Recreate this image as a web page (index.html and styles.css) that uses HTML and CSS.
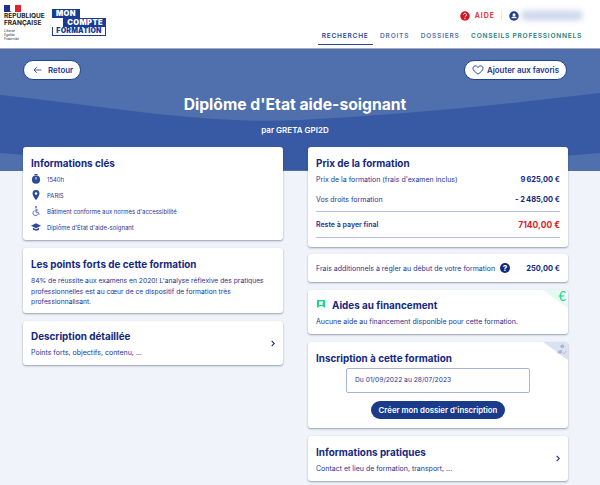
FILE: index.html
```html
<!DOCTYPE html>
<html lang="fr">
<head>
    <meta charset="UTF-8">
    <title>Diplôme d'Etat aide-soignant</title>
    <link rel="stylesheet" href="styles.css">
</head>
<body>

<header class="header">
    <div class="logos">
        <div class="marianne">
            <div class="flag"><span class="flag-blue"></span><span class="flag-white"></span><span class="flag-red"></span></div>
            <div class="rf">RÉPUBLIQUE<br>FRANÇAISE</div>
            <div class="devise">Liberté<br>Égalité<br>Fraternité</div>
        </div>
        <div class="mcf">
            <span class="mcf-mon">MON</span>
            <span class="mcf-compte">COMPTE</span>
            <span class="mcf-formation">FORMATION</span>
        </div>
    </div>
    <div class="header-right">
        <div class="user-row">
            <svg class="ico-help" viewBox="0 0 20 20"><circle cx="10" cy="10" r="9.5" fill="#d8131e"/><path d="M7 7.6a3 3 0 1 1 4.6 2.5c-1 .7-1.6 1.2-1.6 2.4" fill="none" stroke="#fff" stroke-width="2"/><circle cx="10" cy="15.3" r="1.3" fill="#fff"/></svg>
            <span class="aide">AIDE</span>
            <span class="sep"></span>
            <svg class="ico-user" viewBox="0 0 20 20"><circle cx="10" cy="10" r="9.5" fill="#1a3a94"/><circle cx="10" cy="7.5" r="3" fill="#fff"/><path d="M4.5 14.5c1-2.6 3-3.3 5.5-3.3s4.5.7 5.5 3.300z" fill="#fff"/></svg>
            <span class="user-blur"></span>
        </div>
        <nav class="nav">
            <a class="nav-item active">RECHERCHE</a>
            <a class="nav-item">DROITS</a>
            <a class="nav-item">DOSSIERS</a>
            <a class="nav-item green">CONSEILS PROFESSIONNELS</a>
        </nav>
    </div>
</header>

<section class="hero">
    <svg class="hero-bg" viewBox="0 0 600 122" preserveAspectRatio="none">
        <path d="M0 46C100 56 200 76 300 71C400 66 500 56 600 44V104C500 112 400 121 300 121C200 121 100 112 0 104Z" fill="#3859a3"/>
    </svg>
    <div class="hero-btns">
        <button class="pill">
            <svg class="ico-back" viewBox="0 0 14 12"><path d="M13 6H1.500M6 1.500 1.500 6 6 10.500" fill="none" stroke="#1a3a94" stroke-width="1.300"/></svg>
            Retour
        </button>
        <button class="pill">
            <svg class="ico-heart" viewBox="0 0 16 14"><path d="M8 12.800C3.500 9.500 1 7.300 1 4.600 1 2.600 2.500 1.200 4.300 1.200 5.700 1.200 7.200 2 8 3.500 8.800 2 10.300 1.200 11.700 1.200 13.500 1.200 15 2.600 15 4.600 15 7.300 12.500 9.500 8 12.800Z" fill="none" stroke="#1a3a94" stroke-width="1.300"/></svg>
            Ajouter aux favoris
        </button>
    </div>
    <h1>Diplôme d'Etat aide-soignant</h1>
    <p class="par">par GRETA GPI2D</p>
</section>

<main class="columns">
    <div class="col">
        <div class="card key-card">
            <h2>Informations clés</h2>
            <ul class="key-list">
                <li>
                    <svg viewBox="0 0 16 16"><rect x="5.500" y="0" width="5" height="2" fill="#2d4a9a"/><circle cx="8" cy="9" r="6.500" fill="#2d4a9a"/><path d="M8 5v4" stroke="#fff" stroke-width="1.500"/></svg>
                    1540h
                </li>
                <li>
                    <svg viewBox="0 0 16 16"><path d="M8 0a5.500 5.500 0 0 0-5.500 5.500C2.500 9.500 8 16 8 16s5.500-6.500 5.500-10.500A5.500 5.500 0 0 0 8 0Z" fill="#2d4a9a"/><circle cx="8" cy="5.500" r="2" fill="#fff"/></svg>
                    PARIS
                </li>
                <li>
                    <svg viewBox="0 0 16 16"><circle cx="8" cy="1.500" r="1.400" fill="#2d4a9a"/><path d="M8 4v6h3.500l1.500 4M8 6.500h3.500M5.800 7.500a4 4 0 1 0 5 5.500" fill="none" stroke="#2d4a9a" stroke-width="1.300"/></svg>
                    Bâtiment conforme aux normes d'accessibilité
                </li>
                <li>
                    <svg viewBox="0 0 16 16"><path d="M8 2 0 6l8 4 8-4Z" fill="#2d4a9a"/><path d="M3 9v3c2 2.500 8 2.500 10 0V9l-5 2.500Z" fill="#2d4a9a"/></svg>
                    Diplôme d'État d'aide-soignant
                </li>
            </ul>
        </div>
        <div class="card points-card">
            <h2>Les points forts de cette formation</h2>
            <p class="txt">84% de réussite aux examens en 2020! L'analyse réflexive des pratiques professionnelles est au cœur de ce dispositif de formation très professionnalisant.</p>
        </div>
        <div class="card card-link link-short">
            <div>
                <h2>Description détaillée</h2>
                <p class="txt">Points forts, objectifs, contenu, ...</p>
            </div>
            <svg class="chev" viewBox="0 0 6 10"><path d="M1 1l4 4-4 4" fill="none" stroke="#14287f" stroke-width="1.600"/></svg>
        </div>
    </div>

    <div class="col">
        <div class="card price-card">
            <h2>Prix de la formation</h2>
            <div class="price-row"><span>Prix de la formation (frais d'examen inclus)</span><b>9&#8201;625,00 €</b></div>
            <div class="price-row droits"><span>Vos droits formation</span><b>- 2&#8201;485,00 €</b></div>
            <div class="price-row total"><strong>Reste à payer final</strong><b>7140,00 €</b></div>
        </div>
        <div class="card frais-card">
            <span>Frais additionnels à régler au début de votre formation</span>
            <span class="qmark">?</span>
            <b>250,00 €</b>
        </div>
        <div class="card aides-card">
            <span class="corner corner-green"></span>
            <span class="corner-euro">€</span>
            <h2 class="aides-title">
                <svg viewBox="0 0 8 8"><path d="M0 0h8v8L5 6H3L0 8Z" fill="#19d88a"/><path d="M2 1.500h4v1.500L5 4l1 1H2Z" fill="#fff"/></svg>
                Aides au financement
            </h2>
            <p class="txt">Aucune aide au financement disponible pour cette formation.</p>
        </div>
        <div class="card inscr-card">
            <span class="corner corner-grey"></span>
            <svg class="corner-ico" viewBox="0 0 14 14"><circle cx="8" cy="3" r="2.500" fill="#a9b5d6"/><path d="M2 12c0-3 2-4.500 5-4.500 1 0 1 2 0 4.500Z" fill="#a9b5d6"/><path d="M8.500 11l1.500 1.500 3-3.500" fill="none" stroke="#a9b5d6" stroke-width="1.200"/></svg>
            <h2>Inscription à cette formation</h2>
            <div class="dates">Du 01/09/2022 au 28/07/2023</div>
            <button class="cta">Créer mon dossier d'inscription</button>
        </div>
        <div class="card card-link link-tall">
            <div>
                <h2>Informations pratiques</h2>
                <p class="txt">Contact et lieu de formation, transport, ...</p>
            </div>
            <svg class="chev" viewBox="0 0 6 10"><path d="M1 1l4 4-4 4" fill="none" stroke="#14287f" stroke-width="1.600"/></svg>
        </div>
    </div>
</main>

</body>
</html>
```
FILE: styles.css
```css
* {
    box-sizing: border-box;
}
html, body {
    height: 485px;
    overflow: hidden;
}
body {
    margin: 0;
    font-family: Inter, "Noto Sans", sans-serif;
    color: #1c3591;
    background: #f0f3f9;
}
h1, h2, p, ul {
    margin: 0;
    padding: 0;
}

.header {
    height: 49px;
    background: #fff;
    border-bottom: 1px solid #a9acb6;
    display: flex;
    justify-content: space-between;
    padding: 0 18px 0 4px;
}
.logos {
    display: flex;
    gap: 9px;
    padding-top: 5px;
}
.flag {
    display: flex;
    width: 17px;
    height: 7px;
}
.flag span {
    flex: 1;
}
.flag-blue { background: #1f2f8f; }
.flag-white { background: #fff; }
.flag-red { background: #e1232c; }
.marianne {
    width: 39px;
}
.rf {
    margin-top: 1px;
    font-size: 6.500px;
    line-height: 7px;
    font-weight: 700;
    color: #222;
    white-space: nowrap;
}
.devise {
    margin-top: 2px;
    font-size: 3.300px;
    line-height: 4px;
    font-style: italic;
    color: #333;
}
.mcf {
    display: flex;
    flex-direction: column;
    align-items: flex-start;
    margin-top: 4px;
    width: 54px;
    font-size: 7.500px;
    line-height: 9px;
    font-weight: 900;
    letter-spacing: 0.4px;
}
.mcf span {
    display: block;
}
.mcf-mon {
    background: #1a3a94;
    color: #fff;
    padding: 0 4px;
}
.mcf-compte {
    background: #1a3a94;
    color: #fff;
    align-self: stretch;
    text-align: right;
    padding-right: 3px;
    margin-left: 11px;
}
.mcf-formation {
    align-self: stretch;
    border: 1px solid #1a3a94;
    border-top: 0;
    color: #1a3a94;
    text-align: center;
    line-height: 8px;
    height: 9px;
    font-size: 7px;
    letter-spacing: 0.2px;
}

.header-right {
    display: flex;
    flex-direction: column;
    align-items: flex-end;
}
.user-row {
    display: flex;
    align-items: center;
    height: 30px;
    padding-top: 1px;
}
.ico-help, .ico-user {
    width: 10px;
    height: 10px;
}
.aide {
    margin-left: 5px;
    font-size: 7px;
    font-weight: 600;
    letter-spacing: 1px;
    color: #e1232c;
}
.sep {
    width: 1px;
    height: 11px;
    margin: 0 7px 0 6px;
    background: #e6e8ee;
}
.user-blur {
    width: 60px;
    height: 9px;
    margin-left: 3px;
    background: #c9d2ea;
    filter: blur(3px);
}
.nav {
    display: flex;
    gap: 3.500px;
}
.nav-item {
    font-size: 6.600px;
    line-height: 13px;
    font-weight: 600;
    letter-spacing: 0.75px;
    color: #5670ac;
    height: 15px;
    padding: 0 4px;
}
.nav-item.active {
    color: #274a9a;
    border-bottom: 1px solid #274a9a;
}
.nav-item.green {
    color: #22807f;
    padding-right: 0;
}

.hero {
    position: relative;
    height: 122px;
    background: #4f6fad;
    padding: 11px 33px 0 23px;
    text-align: center;
    color: #fff;
}
.hero-bg {
    position: absolute;
    left: 0;
    top: 0;
    width: 100%;
    height: 100%;
    display: block;
}
.hero-btns {
    position: relative;
    display: flex;
    justify-content: space-between;
}
.pill {
    display: flex;
    align-items: center;
    gap: 6px;
    height: 20px;
    padding: 0 7px;
    border: 1px solid #24418f;
    border-radius: 10px;
    background: #fff;
    font-family: inherit;
    font-size: 7.900px;
    font-weight: 600;
    color: #1c3591;
}
.ico-back {
    width: 9px;
    height: 8px;
    margin-left: 2px;
}
.ico-heart {
    width: 12px;
    height: 10px;
    margin-right: -3px;
}
.hero h1 {
    position: relative;
    margin: 15px 0 0;
    font-size: 15.700px;
    line-height: 20px;
    font-weight: 700;
}
.par {
    position: relative;
    margin: 10px 0 0;
    font-size: 8px;
    line-height: 10px;
    font-weight: 600;
}

.columns {
    position: relative;
    display: flex;
    gap: 25px;
    margin-top: -24px;
    padding: 0 32px 0 23px;
}
.col {
    flex: 1;
    display: flex;
    flex-direction: column;
    gap: 8px;
    min-width: 0;
}
.card {
    position: relative;
    background: #fff;
    border-radius: 3px;
    box-shadow: 0 1px 2px rgba(40, 50, 90, 0.45);
    padding: 9px 8px;
}
.card h2 {
    font-size: 9.900px;
    line-height: 14px;
    font-weight: 700;
    color: #14287f;
}
.txt {
    font-size: 7px;
    line-height: 10.500px;
    margin-top: 5px;
}

.key-card {
    height: 93px;
}
.key-list {
    list-style: none;
    margin-top: 1px;
}
.key-list li {
    display: flex;
    align-items: center;
    gap: 6px;
    height: 16px;
    font-size: 5.950px;
}
.key-list svg {
    width: 10px;
    height: 10px;
}
.points-card {
    height: 65px;
}
.points-card .txt {
    font-size: 6.750px;
}

.card-link {
    display: flex;
    align-items: center;
    justify-content: space-between;
    padding-top: 11px;
}
.link-short {
    height: 44px;
}
.link-tall {
    height: 45px;
}
.chev {
    width: 4px;
    height: 7px;
    margin-top: -2px;
}

.price-card {
    height: 100px;
}
.price-row {
    display: flex;
    justify-content: space-between;
    align-items: center;
    height: 18px;
    font-size: 7px;
}
.price-row b {
    font-size: 7.500px;
    font-weight: 700;
    color: #14287f;
}
.droits {
    border-bottom: 1px solid #b3c1e4;
    height: 24px;
}
.total {
    height: 26px;
    border-bottom: 1px solid #b3c1e4;
}
.total strong {
    font-weight: 600;
}
.price-row.total b {
    font-size: 8.500px;
    color: #dd1c1c;
}

.frais-card {
    display: flex;
    align-items: center;
    height: 28px;
    margin-top: -1px;
    padding: 0 8px;
    font-size: 7px;
}
.frais-card b {
    margin-left: auto;
    font-size: 7.500px;
    color: #14287f;
}
.qmark {
    display: inline-block;
    width: 10px;
    height: 10px;
    margin-left: 5px;
    border-radius: 50%;
    background: #14287f;
    color: #fff;
    font-size: 8px;
    line-height: 10px;
    font-weight: 800;
    text-align: center;
}

.corner {
    position: absolute;
    right: 0;
    top: 0;
    width: 25px;
    height: 18px;
    border-top-right-radius: 3px;
    clip-path: polygon(0 0, 100% 0, 100% 100%);
}
.corner-green {
    background: linear-gradient(45deg, #cdf8e4, #f2fef9);
}
.corner-grey { background: #dce1ef; }
.corner-euro {
    position: absolute;
    right: 2px;
    top: 0;
    font-family: Lato, sans-serif;
    font-size: 13px;
    line-height: 12px;
    color: #19d88a;
}
.corner-ico {
    position: absolute;
    right: 1px;
    top: 2px;
    width: 11px;
    height: 11px;
}

.aides-card {
    height: 44px;
    padding-top: 8px;
}
.aides-title {
    display: flex;
    align-items: center;
    gap: 6px;
}
.aides-title svg {
    width: 8px;
    height: 8px;
    margin: -2px 1px 0 1px;
}

.inscr-card {
    height: 86px;
    display: flex;
    flex-direction: column;
    align-items: center;
}
.inscr-card h2 {
    align-self: flex-start;
}
.dates {
    width: 184px;
    height: 25px;
    margin-top: 3px;
    padding-left: 8px;
    border: 1px solid #a7b5dc;
    border-radius: 2px;
    font-size: 6.700px;
    line-height: 23px;
}
.cta {
    height: 20px;
    margin-top: 8px;
    padding: 0 8px;
    border: 0;
    border-radius: 10px;
    background: #1a3a8c;
    color: #fff;
    font-family: inherit;
    font-size: 7.800px;
    font-weight: 600;
}
```
